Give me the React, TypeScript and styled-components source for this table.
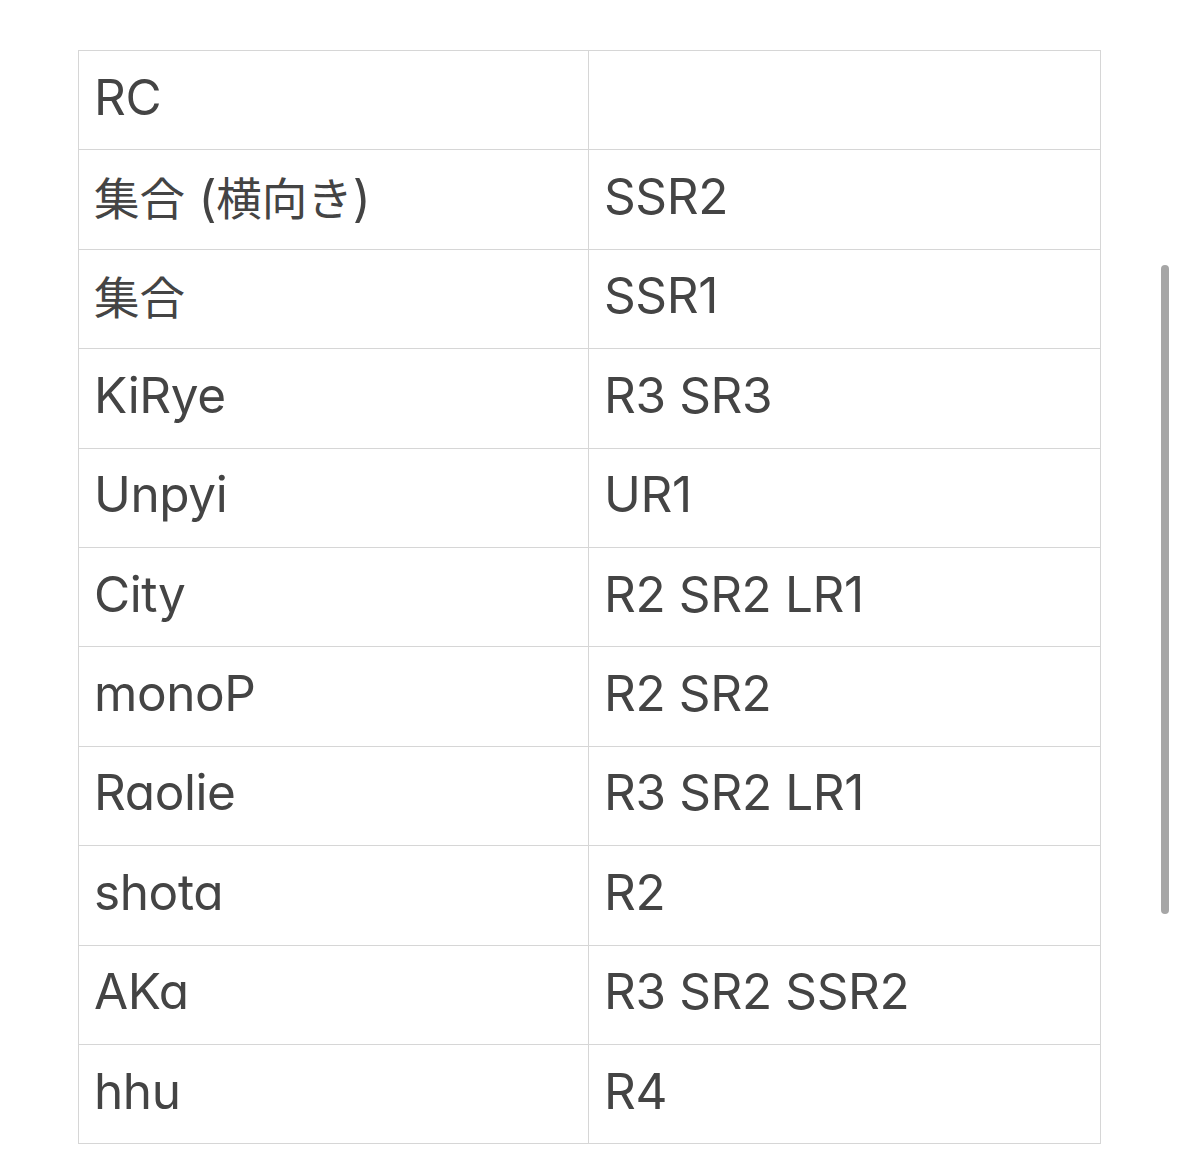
import React from 'react';
import styled, { createGlobalStyle } from 'styled-components';

const GlobalStyle = createGlobalStyle`
  html, body {
    margin: 0;
    padding: 0;
    background: #ffffff;
  }
  body {
    font-family: Inter, "Noto Sans CJK JP", sans-serif;
    font-feature-settings: "cv11";
  }
`;

const Page = styled.div`
  position: relative;
  width: 1179px;
  height: 1176px;
  box-sizing: border-box;
  padding: 50px 0 0 78px;
  background: #ffffff;
`;

const Table = styled.table`
  width: 1022px;
  border-collapse: collapse;
  table-layout: fixed;
`;

const Row = styled.tr`
  height: 99.4px;
`;

const Cell = styled.td<{ $wide?: boolean }>`
  width: ${({ $wide }) => ($wide ? '512px' : '510px')};
  border: 1px solid #d6d6d6;
  padding: 0 15px 7px;
  box-sizing: border-box;
  vertical-align: middle;
  color: #444444;
  font-size: 49.5px;
  font-weight: 400;
  letter-spacing: -0.4px;
  white-space: nowrap;
`;

// CJK glyphs in the reference are narrower than Noto's at the same size
const Jp = styled.span`
  font-size: 45.5px;
  letter-spacing: 0;
`;

const ScrollThumb = styled.div`
  position: absolute;
  left: 1161px;
  top: 265px;
  width: 8px;
  height: 649px;
  border-radius: 4px;
  background: #a6a6a6;
`;

const rows: [React.ReactNode, string][] = [
  ['RC', ''],
  [<><Jp>集合</Jp> (<Jp>横向き</Jp>)</>, 'SSR2'],
  [<Jp>集合</Jp>, 'SSR1'],
  ['KiRye', 'R3 SR3'],
  ['Unpyi', 'UR1'],
  ['City', 'R2 SR2 LR1'],
  ['monoP', 'R2 SR2'],
  ['Raolie', 'R3 SR2 LR1'],
  ['shota', 'R2'],
  ['AKa', 'R3 SR2 SSR2'],
  ['hhu', 'R4'],
];

export default function App() {
  return (
    <Page>
      <GlobalStyle />
      <Table>
        <tbody>
          {rows.map(([name, cards], index) => (
            <Row key={index}>
              <Cell>{name}</Cell>
              <Cell $wide>{cards}</Cell>
            </Row>
          ))}
        </tbody>
      </Table>
      <ScrollThumb />
    </Page>
  );
}
